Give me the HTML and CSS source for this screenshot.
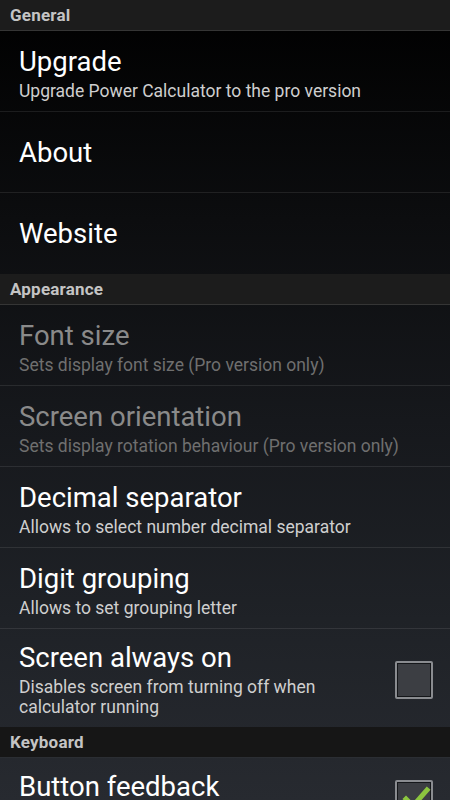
FILE: index.html
```html
<!DOCTYPE html>
<html>
<head>
<meta charset="utf-8">
<link rel="stylesheet" href="styles.css">
</head>
<body>
<div class="screen">
  <div class="cat">General</div>
  <div class="row">
    <div class="text">
      <div class="title">Upgrade</div>
      <div class="sub">Upgrade Power Calculator to the pro version</div>
    </div>
  </div>
  <div class="row single">
    <div class="text"><div class="title">About</div></div>
  </div>
  <div class="row single last">
    <div class="text"><div class="title">Website</div></div>
  </div>

  <div class="cat">Appearance</div>
  <div class="row disabled">
    <div class="text">
      <div class="title">Font size</div>
      <div class="sub">Sets display font size (Pro version only)</div>
    </div>
  </div>
  <div class="row disabled">
    <div class="text">
      <div class="title">Screen orientation</div>
      <div class="sub">Sets display rotation behaviour (Pro version only)</div>
    </div>
  </div>
  <div class="row">
    <div class="text">
      <div class="title">Decimal separator</div>
      <div class="sub">Allows to select number decimal separator</div>
    </div>
  </div>
  <div class="row">
    <div class="text">
      <div class="title">Digit grouping</div>
      <div class="sub">Allows to set grouping letter</div>
    </div>
  </div>
  <div class="row tall last">
    <div class="text narrow">
      <div class="title">Screen always on</div>
      <div class="sub">Disables screen from turning off when calculator running</div>
    </div>
    <div class="check"></div>
  </div>

  <div class="cat dark">Keyboard</div>
  <div class="row final">
    <div class="text narrow">
      <div class="title">Button feedback</div>
    </div>
    <div class="check on">
      <svg viewBox="0 0 38 38" width="38" height="38"><path d="M11 19 L18 26 L32 10" fill="none" stroke="#8cc63f" stroke-width="5" stroke-linecap="square"/></svg>
    </div>
  </div>
</div>
</body>
</html>
```

FILE: styles.css
```css
html, body {
  margin: 0;
  padding: 0;
}
body {
  width: 450px;
  height: 800px;
  overflow: hidden;
  font-family: Roboto, "Noto Sans", sans-serif;
  background: linear-gradient(to bottom, #000000 0px, #0c0d0f 220px, #16181c 420px, #1f2227 620px, #272a30 800px);
}
.screen {
  display: flex;
  flex-direction: column;
}
.cat {
  height: 30px;
  box-sizing: content-box;
  border-bottom: 1px solid #353535;
  background: #1c1c1c;
  color: #c4c4c4;
  font-weight: bold;
  font-size: 17px;
  letter-spacing: 0.2px;
  line-height: 30px;
  padding-left: 10px;
  flex-shrink: 0;
}
.cat.dark {
  background: #161616;
  border-bottom-color: #2b2e33;
}
.row {
  height: 81px;
  box-sizing: border-box;
  padding: 13px 17px 9px 19px;
  border-bottom: 1px solid rgba(255,255,255,0.09);
  display: flex;
  align-items: flex-start;
  justify-content: space-between;
  flex-shrink: 0;
}
.row.single {
  align-items: center;
  padding-top: 0;
  padding-bottom: 0;
}
.row.last {
  border-bottom: none;
}
.row.tall {
  height: 98px;
  padding-top: 11px;
}
.row.final {
  padding-top: 11px;
}
.text {
  display: flex;
  flex-direction: column;
}
.text.narrow {
  width: 350px;
}
.title {
  color: #ffffff;
  font-size: 27.5px;
  line-height: 35px;
}
.sub {
  margin-top: 2px;
  color: #cfcfcf;
  font-size: 17.5px;
  line-height: 20px;
}
.disabled .title {
  color: #8a8a8a;
}
.disabled .sub {
  color: #6f6f6f;
}
.check {
  align-self: center;
  width: 38px;
  height: 38px;
  box-sizing: border-box;
  border: 2px solid #8a8c90;
  box-shadow: inset 0 0 0 1px #15171a;
  background: #3c3e43;
  border-radius: 2px;
  position: relative;
  flex-shrink: 0;
}
.row.tall .check {
  margin-top: 2px;
}
.check svg {
  position: absolute;
  left: -2px;
  top: -2px;
}
```
